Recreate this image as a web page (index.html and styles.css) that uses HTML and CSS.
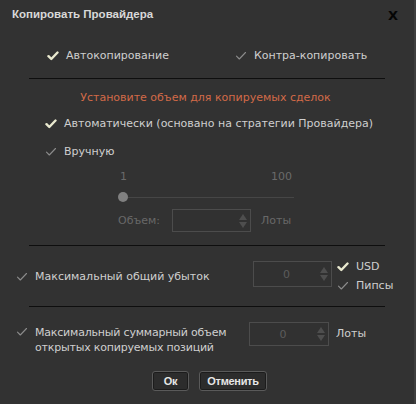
FILE: index.html
```html
<!DOCTYPE html>
<html lang="ru">
<head>
<meta charset="utf-8">
<title>Копировать Провайдера</title>
<link rel="stylesheet" href="styles.css">
</head>
<body>
<div class="dialog">
  <div class="titlebar">
    <span class="title">Копировать Провайдера</span>
    <span class="close">X</span>
  </div>

  <div class="row1">
    <label class="opt opt-a"><svg class="ck on" viewBox="0 0 12 10"><path d="M1.5 5.2 L4.3 8 L10.5 1.5"/></svg>Автокопирование</label>
    <label class="opt opt-b"><svg class="ck off" viewBox="0 0 12 10"><path d="M1.5 5.2 L4.3 8 L10.5 1.5"/></svg>Контра-копировать</label>
  </div>

  <div class="sep"></div>

  <div class="notice">Установите объем для копируемых сделок</div>

  <label class="opt opt-auto"><svg class="ck on" viewBox="0 0 12 10"><path d="M1.5 5.2 L4.3 8 L10.5 1.5"/></svg>Автоматически (основано на стратегии Провайдера)</label>
  <label class="opt opt-man"><svg class="ck off" viewBox="0 0 12 10"><path d="M1.5 5.2 L4.3 8 L10.5 1.5"/></svg>Вручную</label>

  <div class="slider">
    <div class="slabels"><span>1</span><span>100</span></div>
    <div class="strack"><span class="thumb"></span><span class="line"></span></div>
    <div class="volrow">
      <span class="dim">Объем:</span>
      <span class="box vbox"><span class="val"></span><span class="spin"><i class="up"></i><i class="dn"></i></span></span>
      <span class="dim">Лоты</span>
    </div>
  </div>

  <div class="sep sep2"></div>

  <div class="lossrow">
    <label class="opt opt-loss"><svg class="ck off" viewBox="0 0 12 10"><path d="M1.5 5.2 L4.3 8 L10.5 1.5"/></svg>Максимальный общий убыток</label>
    <span class="box lbox"><span class="val">0</span><span class="spin"><i class="up"></i><i class="dn"></i></span></span>
    <div class="units">
      <label class="opt"><svg class="ck on" viewBox="0 0 12 10"><path d="M1.5 5.2 L4.3 8 L10.5 1.5"/></svg>USD</label>
      <label class="opt"><svg class="ck off" viewBox="0 0 12 10"><path d="M1.5 5.2 L4.3 8 L10.5 1.5"/></svg>Пипсы</label>
    </div>
  </div>

  <div class="sep sep3"></div>

  <div class="totalrow">
    <label class="opt opt-total"><svg class="ck off" viewBox="0 0 12 10"><path d="M1.5 5.2 L4.3 8 L10.5 1.5"/></svg><span>Максимальный суммарный объем<br>открытых копируемых позиций</span></label>
    <span class="box tbox"><span class="val">0</span><span class="spin"><i class="up"></i><i class="dn"></i></span></span>
    <span class="unit">Лоты</span>
  </div>

  <div class="buttons">
    <button class="btn ok">Ок</button>
    <button class="btn cancel">Отменить</button>
  </div>
</div>
</body>
</html>
```

FILE: styles.css
```css
html, body {
  margin: 0;
  padding: 0;
  background: #323232;
}
.dialog {
  width: 414px;
  height: 404px;
  background: #323232;
  border-right: 2px solid #3e3e3e;
  font-family: "DejaVu Sans", Verdana, sans-serif;
  font-size: 11px;
  color: #cfcfcf;
  overflow: hidden;
}
.titlebar {
  height: 27px;
  display: flex;
  align-items: center;
  justify-content: space-between;
  padding: 0 16px 0 12px;
}
.title {
  font-family: "Liberation Sans", Arial, sans-serif;
  font-weight: bold;
  font-size: 11.5px;
  color: #d8d8d8;
}
.close {
  font-family: "DejaVu Sans", sans-serif;
  font-weight: bold;
  font-size: 13px;
  color: #050505;
  padding-top: 3px;
}
.opt {
  display: flex;
  align-items: center;
  white-space: nowrap;
  line-height: 16px;
}
.ck {
  width: 12px;
  height: 10px;
  margin-right: 7px;
  flex: none;
  fill: none;
  stroke-linecap: round;
  stroke-linejoin: round;
}
.ck.on { stroke: #e9e9cf; stroke-width: 2.4; }
.ck.off { stroke: #8c8c8c; stroke-width: 1.1; }

.row1 {
  height: 28px;
  margin-top: 15px;
  display: flex;
  align-items: center;
  padding-left: 47px;
}
.opt-b { margin-left: 66px; }

.sep {
  height: 1px;
  background: #0e0e0e;
  margin: 8px 29px 0 29px;
}
.notice {
  margin-top: 12px;
  height: 14px;
  line-height: 14px;
  text-align: center;
  color: #d26a48;
  padding-right: 3px;
}
.opt-auto {
  margin: 11px 0 0 45px;
  height: 16px;
}
.opt-man {
  margin: 12px 0 0 45px;
  height: 16px;
}
.slider {
  display: grid;
  grid-template-columns: 176px;
  padding-left: 118px;
  color: #6a6a6a;
}
.slabels {
  margin-top: 11px;
  height: 12px;
  line-height: 12px;
  display: flex;
  justify-content: space-between;
  padding: 0 2px 0 2px;
}
.strack {
  margin-top: 8px;
  height: 12px;
  display: flex;
  align-items: center;
}
.thumb {
  width: 10px;
  height: 10px;
  border-radius: 50%;
  background: #808080;
  flex: none;
}
.line {
  flex: 1;
  height: 1px;
  background: #464646;
}
.volrow {
  margin-top: 6px;
  display: flex;
  align-items: center;
  height: 23px;
}
.dim { color: #686868; }
.box {
  box-sizing: border-box;
  border: 1px solid #4c4c4c;
  background: #313131;
  display: flex;
  align-items: center;
  position: relative;
  color: #5c5c5c;
}
.val {
  flex: 1;
  text-align: center;
}
.spin {
  width: 10px;
  display: flex;
  flex-direction: column;
  align-items: center;
  gap: 2px;
  margin-right: 2px;
}
.spin i {
  width: 0;
  height: 0;
  border-left: 4px solid transparent;
  border-right: 4px solid transparent;
}
.spin .up { border-bottom: 6px solid #4e4e4e; }
.spin .dn { border-top: 6px solid #4e4e4e; }
.vbox {
  width: 79px;
  height: 23px;
  margin: 0 10px 0 12px;
  flex: none;
}
.sep2 { margin-top: 13px; }
.lossrow {
  margin-top: 12px;
  height: 36px;
  display: flex;
  align-items: center;
  padding-left: 16px;
}
.opt-loss { width: 237px; padding-top: 2px; }
.lbox {
  width: 79px;
  height: 26px;
  margin-top: -4px;
}
.units {
  margin-left: 5px;
  display: flex;
  flex-direction: column;
  gap: 3px;
}
.sep3 { margin-top: 12px; }
.totalrow {
  margin-top: 15px;
  display: flex;
  align-items: flex-start;
  padding-left: 16px;
  height: 34px;
}
.opt-total {
  width: 233px;
  align-items: flex-start;
  line-height: 15px;
  padding-top: 3px;
  letter-spacing: -0.2px;
}
.opt-total .ck { margin-top: 2px; }
.tbox {
  width: 80px;
  height: 24px;
  margin-top: 0;
}
.unit {
  margin: 5px 0 0 7px;
  line-height: 14px;
}
.buttons {
  margin-top: 15px;
  display: flex;
  justify-content: center;
  gap: 10px;
  padding-left: 5px;
}
.btn {
  font-family: "Liberation Sans", Arial, sans-serif;
  font-weight: bold;
  font-size: 11px;
  color: #e6e6e6;
  background: #2c2c2c;
  border: 1px solid #5a5a5a;
  box-shadow: inset 0 0 0 1px #1c1c1c;
  border-radius: 3px;
  height: 20px;
  padding: 0;
  letter-spacing: -0.3px;
}
.ok { width: 37px; }
.cancel { width: 68px; }
```
